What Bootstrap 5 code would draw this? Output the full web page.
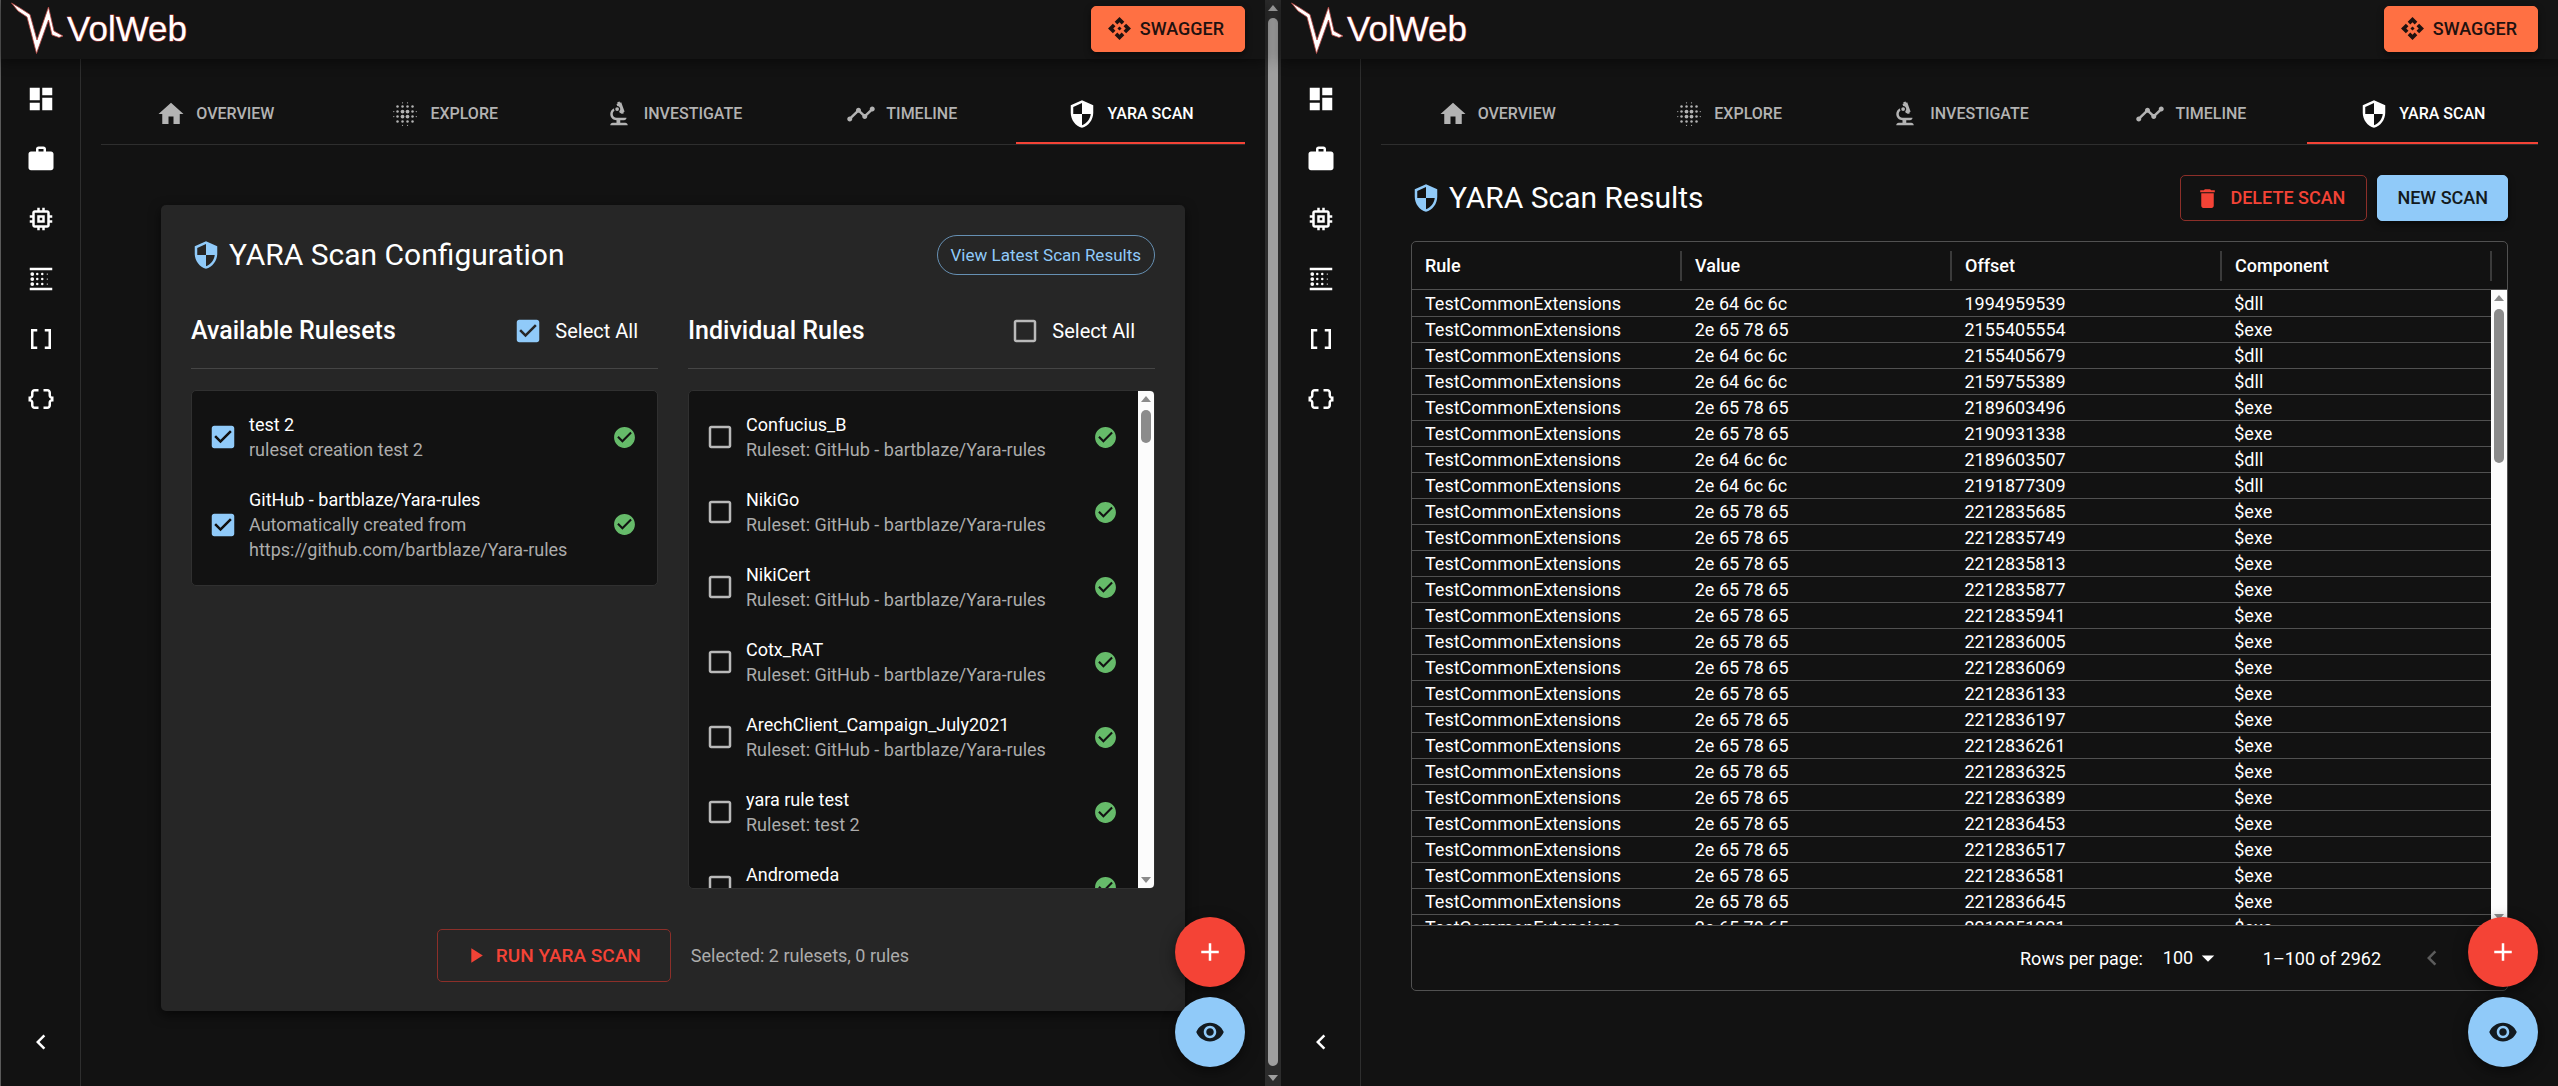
<!DOCTYPE html>
<html lang="en" data-bs-theme="dark">
<head>
<meta charset="utf-8">
<meta name="viewport" content="width=device-width, initial-scale=1">
<title>VolWeb</title>
<link href="https://cdn.jsdelivr.net/npm/bootstrap@5.3.0/dist/css/bootstrap.min.css" rel="stylesheet">
<style>
:root{--vw-bg:#121212;--vw-blue:#90caf9;--vw-red:#f44336;--vw-muted:#b3b3b3;--vw-line:#2e2e2e;--vw-grid:#515151}
body{background:var(--vw-bg);color:#fff;font-family:Roboto,"Liberation Sans",sans-serif;font-size:18px;line-height:25px;overflow:hidden}
svg{fill:currentColor;flex:none}
.ico-lg{width:30px;height:30px}
.ico-md{width:25px;height:25px}
.pane{min-width:0;background:var(--vw-bg)}
.pane-first{flex:1280 1 0;border-left:1px solid #5a5a5a}
.pane-second{flex:1277 1 0}
.topbar{height:59px;background:#141414;box-shadow:0 3px 12px rgba(0,0,0,.45);padding:0 20px 2px 10px;z-index:2}
.brand-mark{width:54px;height:54px}
.brand-name{font:400 35px/40px "Liberation Sans",sans-serif;color:#fff;-webkit-text-stroke:1px #b5423e;paint-order:stroke fill;margin-left:2px}
.btn{--bs-btn-border-radius:5px;--bs-btn-font-weight:500;--bs-btn-font-size:18px;--bs-btn-line-height:24px}
.btn-swagger{--bs-btn-bg:#ff7043;--bs-btn-color:#1f1210;--bs-btn-border-color:#ff7043;height:46px;padding:0 20px 0 15px;box-shadow:0 3px 6px rgba(0,0,0,.5)}
.side{width:80px;flex:none;border-right:1px solid var(--vw-line);padding:10px 0 14px}
.side a{height:60px;color:#fff}
.main{min-width:0}
.tabs{margin:0 20px;border-bottom:1px solid var(--vw-line);height:86px}
.tabs a{flex:1 1 0;gap:10px;color:var(--vw-muted);font-weight:500;font-size:16px;text-decoration:none;padding-top:26px;border-bottom:2px solid transparent}
.tabs a.active{color:#fff;border-color:var(--vw-red)}
.config{margin:60px 60px 0 60px;padding:30px 30px 29px;background:#262626;border-radius:5px;box-shadow:0 4px 12px rgba(0,0,0,.6)}
.slot{padding:0 20px}
.page-title{font-size:30px;line-height:40px;font-weight:400;margin:0}
.tint{color:var(--vw-blue)}
.btn-pill{--bs-btn-border-radius:20px;--bs-btn-font-size:17px;--bs-btn-font-weight:400;--bs-btn-color:var(--vw-blue);--bs-btn-border-color:#6690b3;height:40px;padding:0 13px}
.lists{gap:30px;margin-top:31px}
.lists>section{flex:1 1 0;min-width:0}
.sect{height:63px;border-bottom:1px solid #454545;padding:0 20px 12px 0;margin-bottom:21px}
.sect h2{font-size:25px;line-height:30px;font-weight:500;margin:0}
.sect label{font-size:20px}
.tick{appearance:none;width:30px;height:30px;margin:0;flex:none;background:center/30px url("data:image/svg+xml,%3Csvg xmlns='http://www.w3.org/2000/svg' viewBox='0 0 24 24'%3E%3Cpath fill='%23b9b9b9' d='M19 5v14H5V5h14m0-2H5c-1.1 0-2 .9-2 2v14c0 1.1.9 2 2 2h14c1.1 0 2-.9 2-2V5c0-1.1-.9-2-2-2z'/%3E%3C/svg%3E")}
.tick:checked{background-image:url("data:image/svg+xml,%3Csvg xmlns='http://www.w3.org/2000/svg' viewBox='0 0 24 24'%3E%3Cpath fill='%2390caf9' d='M19 3H5c-1.11 0-2 .9-2 2v14c0 1.1.89 2 2 2h14c1.11 0 2-.9 2-2V5c0-1.1-.89-2-2-2zm-9 14l-5-5 1.41-1.41L10 14.17l7.59-7.59L19 8l-9 9z'/%3E%3C/svg%3E")}
.rulebox{background:var(--vw-bg);border:1px solid #303030;border-radius:5px;overflow:hidden}
.rulebox ul{list-style:none;margin:0;padding:9px 20px 10px 16px;min-width:0}
.rulebox li{padding:12px 0 13px}
.rule-label{margin-left:11px}
.rulebox label small{display:block;font-size:inherit;color:#acacac}
.rules-scroll{height:499px}
.ok{color:#66bb6a}
.sbar{width:16px;flex:none;background:#fcfcfc;color:#8b8b8b;padding:5px 0}
.sbar i{display:block;width:10px;border-radius:5px;background:currentColor}
.sbar svg{width:10px;height:6px}
.sbar-dark{background:#2c2c2c;color:#9f9f9f}
.sbar-dark i{flex:1;margin:7px 0 9px}
.btn-line{--bs-btn-color:var(--vw-red);--bs-btn-border-color:#8c2f29}
.btn-run{height:53px;--bs-btn-font-size:19px;padding:0 29px 0 25px}
.btn-new{--bs-btn-bg:var(--vw-blue);--bs-btn-color:#131a20;--bs-btn-border-color:var(--vw-blue);padding:0 19px;box-shadow:0 3px 6px rgba(0,0,0,.5)}
.h46{height:46px}
.run-row{margin-top:40px}
.sel-note{color:#acacac;margin-left:4px}
.del-row{gap:10px}
.btn-del{gap:10px;padding:0 21px 0 14px}
.fabs{position:absolute;right:20px;bottom:19px;gap:10px;z-index:3}
.fabs button{width:70px;height:70px;border:0;border-radius:50%;box-shadow:0 4px 14px rgba(0,0,0,.5)}
.fab-add{background:var(--vw-red);color:#fff}
.fab-eye{background:var(--vw-blue);color:#131a20}
.results{margin:30px 30px 0}
.gridbox{margin-top:20px;border:1px solid var(--vw-grid);border-radius:5px}
.gridbox table{width:100%;table-layout:fixed;border-collapse:separate;border-spacing:0}
.gridhead{padding-right:15px;border-bottom:1px solid var(--vw-grid)}
.gridhead div{flex:1 1 0;height:47px;padding-left:13px;font-weight:500}
.gridhead div::after{content:"";width:2px;height:30px;background:#3b3b3b}
.gridbody{height:635px;overflow:hidden}
.gridrows{padding-top:1px}
.gridbody td{height:26px;line-height:25px;padding:0 13px;border-bottom:1px solid var(--vw-grid)}
.gridfoot{height:65px;border-top:1px solid var(--vw-grid);padding-right:10px}
.gridfoot select{appearance:none;background:none;border:0;color:#fff;width:60px;padding:0 0 1px 0}
.pagebtn{background:none;border:0;padding:0;color:#5c5c5c}
.pagebtn svg{display:block}
.pagebtn+.pagebtn{margin-left:20px}
.caret{margin-left:-30px;pointer-events:none}
.range{margin:0 36px 0 40px}
</style>
</head>
<body>
<svg class="d-none">
<symbol id="i-dash" viewBox="0 0 24 24"><path d="M3 13h8V3H3v10zm0 8h8v-6H3v6zm10 0h8V11h-8v10zm0-18v6h8V3h-8z"/></symbol>
<symbol id="i-work" viewBox="0 0 24 24"><path d="M20 6h-4V4c0-1.11-.89-2-2-2h-4c-1.11 0-2 .89-2 2v2H4c-1.11 0-1.99.89-1.99 2L2 19c0 1.11.89 2 2 2h16c1.11 0 2-.89 2-2V8c0-1.11-.89-2-2-2zm-6 0h-4V4h4v2z"/></symbol>
<symbol id="i-mem" viewBox="0 0 24 24"><path d="M15 9H9v6h6V9zm-2 4h-2v-2h2v2zm8-2V9h-2V7c0-1.1-.9-2-2-2h-2V3h-2v2h-2V3H9v2H7c-1.1 0-2 .9-2 2v2H3v2h2v2H3v2h2v2c0 1.1.9 2 2 2h2v2h2v-2h2v2h2v-2h2c1.1 0 2-.9 2-2v-2h2v-2h-2v-2h2zm-4 6H7V7h10v10z"/></symbol>
<symbol id="i-lin" viewBox="0 0 24 24"><path d="M3 3h18v2H3zM3 19h18v2H3z"/><circle cx="5" cy="8" r="1.5"/><circle cx="5" cy="12" r="1.5"/><circle cx="5" cy="16" r="1.5"/><circle cx="9" cy="8" r="1"/><circle cx="9" cy="12" r="1"/><circle cx="9" cy="16" r="1"/><circle cx="13" cy="8" r="1"/><circle cx="13" cy="12" r="1"/><circle cx="13" cy="16" r="1"/><circle cx="17" cy="8" r=".5"/><circle cx="17" cy="12" r=".5"/><circle cx="17" cy="16" r=".5"/></symbol>
<symbol id="i-arr" viewBox="0 0 24 24"><path d="M15 4v2h3v12h-3v2h5V4zM4 20h5v-2H6V6h3V4H4z"/></symbol>
<symbol id="i-obj" viewBox="0 0 24 24"><path d="M4 7v2c0 .55-.45 1-1 1H2v4h1c.55 0 1 .45 1 1v2c0 1.65 1.35 3 3 3h3v-2H7c-.55 0-1-.45-1-1v-2c0-1.3-.84-2.42-2-2.83v-.34C5.16 11.42 6 10.3 6 9V7c0-.55.45-1 1-1h3V4H7C5.35 4 4 5.35 4 7zM21 10c-.55 0-1-.45-1-1V7c0-1.65-1.35-3-3-3h-3v2h3c.55 0 1 .45 1 1v2c0 1.3.84 2.42 2 2.83v.34c-1.16.41-2 1.52-2 2.83v2c0 .55-.45 1-1 1h-3v2h3c1.65 0 3-1.35 3-3v-2c0-.55.45-1 1-1h1v-4h-1z"/></symbol>
<symbol id="i-left" viewBox="0 0 24 24"><path d="M15.41 7.41L14 6l-6 6 6 6 1.41-1.41L10.83 12z"/></symbol>
<symbol id="i-right" viewBox="0 0 24 24"><path d="M8.59 16.59L13.17 12 8.59 7.41 10 6l6 6-6 6z"/></symbol>
<symbol id="i-home" viewBox="0 0 24 24"><path d="M10 20v-6h4v6h5v-8h3L12 3 2 12h3v8z"/></symbol>
<symbol id="i-blur" viewBox="0 0 24 24"><circle cx="6" cy="6" r="1"/><circle cx="10" cy="6" r="1"/><circle cx="14" cy="6" r="1"/><circle cx="18" cy="6" r="1"/><circle cx="6" cy="10" r="1"/><circle cx="10" cy="10" r="1.5"/><circle cx="14" cy="10" r="1.5"/><circle cx="18" cy="10" r="1"/><circle cx="6" cy="14" r="1"/><circle cx="10" cy="14" r="1.5"/><circle cx="14" cy="14" r="1.5"/><circle cx="18" cy="14" r="1"/><circle cx="6" cy="18" r="1"/><circle cx="10" cy="18" r="1"/><circle cx="14" cy="18" r="1"/><circle cx="18" cy="18" r="1"/><circle cx="10" cy="3" r=".5"/><circle cx="14" cy="3" r=".5"/><circle cx="10" cy="21" r=".5"/><circle cx="14" cy="21" r=".5"/><circle cx="3" cy="10" r=".5"/><circle cx="3" cy="14" r=".5"/><circle cx="21" cy="10" r=".5"/><circle cx="21" cy="14" r=".5"/></symbol>
<symbol id="i-bio" viewBox="0 0 24 24"><path d="M7 19c-1.1 0-2 .9-2 2h14c0-1.1-.9-2-2-2h-4v-2h3c1.1 0 2-.9 2-2h-8c-1.66 0-3-1.34-3-3 0-1.09.59-2.04 1.46-2.56C8.17 9.03 8 8.54 8 8c0-.21.04-.42.09-.62C6.28 8.13 5 9.92 5 12c0 2.76 2.24 5 5 5v2H7z"/><path d="M10.56 5.51C11.91 5.54 13 6.64 13 8c0 .75-.33 1.41-.85 1.87l.59 1.62.94-.34.34.94 1.88-.68-.34-.94.94-.34-2.74-7.52-.94.34-.34-.94-1.88.68.34.94-.94.35.56 1.53z"/><circle cx="10.5" cy="8" r="1.5"/></symbol>
<symbol id="i-time" viewBox="0 0 24 24"><path d="M23 8c0 1.1-.9 2-2 2-.18 0-.35-.02-.51-.07l-3.56 3.55c.05.16.07.34.07.52 0 1.1-.9 2-2 2s-2-.9-2-2c0-.18.02-.36.07-.52l-2.55-2.55c-.16.05-.34.07-.52.07s-.36-.02-.52-.07l-4.55 4.56c.05.16.07.33.07.51 0 1.1-.9 2-2 2s-2-.9-2-2 .9-2 2-2c.18 0 .35.02.51.07l4.56-4.55C8.02 9.36 8 9.18 8 9c0-1.1.9-2 2-2s2 .9 2 2c0 .18-.02.36-.07.52l2.55 2.55c.16-.05.34-.07.52-.07s.36.02.52.07l3.55-3.56C19.02 8.35 19 8.18 19 8c0-1.1.9-2 2-2s2 .9 2 2z"/></symbol>
<symbol id="i-sec" viewBox="0 0 24 24"><path d="M12 1L3 5v6c0 5.55 3.84 10.74 9 12 5.16-1.26 9-6.45 9-12V5l-9-4zm0 10.99h7c-.53 4.12-3.28 7.79-7 8.94V12H5V6.3l7-3.11v8.8z"/></symbol>
<symbol id="i-api" viewBox="0 0 24 24"><path d="m14 12-2 2-2-2 2-2 2 2zm-2-6 2.12 2.12 2.5-2.5L12 1 7.38 5.62l2.5 2.5L12 6zm-6 6 2.12-2.12-2.5-2.5L1 12l4.62 4.62 2.5-2.5L6 12zm12 0-2.12 2.12 2.5 2.5L23 12l-4.62-4.62-2.5 2.5L18 12zm-6 6-2.12-2.12-2.5 2.5L12 23l4.62-4.62-2.5-2.5L12 18z"/></symbol>
<symbol id="i-ok" viewBox="0 0 24 24"><path d="M12 2C6.48 2 2 6.48 2 12s4.48 10 10 10 10-4.48 10-10S17.52 2 12 2zm-2 15-5-5 1.41-1.41L10 14.17l7.59-7.59L19 8l-9 9z"/></symbol>
<symbol id="i-play" viewBox="0 0 24 24"><path d="M8 5v14l11-7z"/></symbol>
<symbol id="i-del" viewBox="0 0 24 24"><path d="M6 19c0 1.1.9 2 2 2h8c1.1 0 2-.9 2-2V7H6v12zM19 4h-3.5l-1-1h-5l-1 1H5v2h14V4z"/></symbol>
<symbol id="i-add" viewBox="0 0 24 24"><path d="M19 13h-6v6h-2v-6H5v-2h6V5h2v6h6v2z"/></symbol>
<symbol id="i-eye" viewBox="0 0 24 24"><path d="M12 4.5C7 4.5 2.73 7.61 1 12c1.73 4.39 6 7.5 11 7.5s9.27-3.11 11-7.5c-1.73-4.39-6-7.5-11-7.5zM12 17c-2.76 0-5-2.24-5-5s2.24-5 5-5 5 2.24 5 5-2.24 5-5 5zm0-8c-1.66 0-3 1.34-3 3s1.34 3 3 3 3-1.34 3-3-1.34-3-3-3z"/></symbol>
<symbol id="i-drop" viewBox="0 0 24 24"><path d="M7 10l5 5 5-5z"/></symbol>
<symbol id="i-up" viewBox="0 0 10 6"><path d="M0 6h10L5 0z"/></symbol>
<symbol id="i-dn" viewBox="0 0 10 6"><path d="M0 0h10L5 6z"/></symbol>
<symbol id="i-mark" viewBox="0 0 54 54"><path fill="#fff" stroke="#b5423e" stroke-width=".8" d="M.5 1 9 6 19 12.500 26 38 37.500 5 43 29 52 34 48 35.500 41 33 37.500 18 25.500 51.500 16 15 7 9z"/></symbol>
</svg>
<div class="d-flex vh-100">
  <div class="pane pane-first d-flex">
    <div class="pane position-relative d-flex flex-column flex-grow-1" data-pane="config"></div>
    <div class="sbar sbar-dark d-flex flex-column align-items-center"><svg><use href="#i-up"/></svg><i></i><svg><use href="#i-dn"/></svg></div>
  </div>
  <div class="pane pane-second position-relative d-flex flex-column" data-pane="results"></div>
</div>

<template id="shell">
  <header class="topbar d-flex align-items-center justify-content-between position-relative">
    <a href="#" class="d-flex text-decoration-none"><svg class="brand-mark"><use href="#i-mark"/></svg><span class="brand-name align-self-center">VolWeb</span></a>
    <button type="button" class="btn btn-swagger d-flex align-items-center gap-2"><svg class="ico-md"><use href="#i-api"/></svg>SWAGGER</button>
  </header>
  <div class="d-flex flex-grow-1">
    <nav class="side d-flex flex-column align-items-stretch" aria-label="Sections"></nav>
    <main class="main flex-grow-1">
      <nav class="tabs d-flex" aria-label="Evidence"></nav>
      <div class="slot"></div>
    </main>
  </div>
  <div class="fabs d-flex flex-column">
    <button type="button" class="fab-add" aria-label="Add"><svg class="ico-lg"><use href="#i-add"/></svg></button>
    <button type="button" class="fab-eye" aria-label="View"><svg class="ico-lg"><use href="#i-eye"/></svg></button>
  </div>
</template>

<template id="config">
  <div class="config">
    <div class="d-flex align-items-center justify-content-between">
      <div class="d-flex align-items-center tint"><svg class="ico-lg me-2"><use href="#i-sec"/></svg><h1 class="page-title text-white">YARA Scan Configuration</h1></div>
      <button type="button" class="btn btn-pill">View Latest Scan Results</button>
    </div>
    <div class="lists d-flex align-items-start">
      <section>
        <div class="sect d-flex align-items-center justify-content-between"><h2>Available Rulesets</h2><div class="d-flex align-items-center gap-2"><input class="tick me-1" type="checkbox" id="all-sets" checked><label for="all-sets">Select All</label></div></div>
        <div class="rulebox"><ul data-list="sets"></ul></div>
      </section>
      <section>
        <div class="sect d-flex align-items-center justify-content-between"><h2>Individual Rules</h2><div class="d-flex align-items-center gap-2"><input class="tick me-1" type="checkbox" id="all-rules"><label for="all-rules">Select All</label></div></div>
        <div class="rulebox rules-scroll d-flex"><ul class="flex-grow-1" data-list="rules"></ul>
          <div class="sbar d-flex flex-column align-items-center"><svg><use href="#i-up"/></svg><i class="mt-2" style="height:33px"></i><svg class="mt-auto"><use href="#i-dn"/></svg></div>
        </div>
      </section>
    </div>
    <div class="run-row d-flex align-items-center justify-content-center gap-3">
      <button type="button" class="btn btn-line btn-run d-flex align-items-center gap-2"><svg class="ico-md"><use href="#i-play"/></svg>RUN YARA SCAN</button>
      <span class="sel-note">Selected: 2 rulesets, 0 rules</span>
    </div>
  </div>
</template>

<template id="results">
  <div class="results">
    <div class="d-flex align-items-center justify-content-between">
      <div class="d-flex align-items-center tint"><svg class="ico-lg me-2"><use href="#i-sec"/></svg><h1 class="page-title text-white">YARA Scan Results</h1></div>
      <div class="d-flex del-row">
        <button type="button" class="btn btn-line h46 btn-del d-flex align-items-center"><svg class="ico-md"><use href="#i-del"/></svg>DELETE SCAN</button>
        <button type="button" class="btn btn-new h46">NEW SCAN</button>
      </div>
    </div>
    <div class="gridbox">
      <div class="gridhead d-flex" aria-hidden="true"><div class="d-flex align-items-center justify-content-between">Rule</div><div class="d-flex align-items-center justify-content-between">Value</div><div class="d-flex align-items-center justify-content-between">Offset</div><div class="d-flex align-items-center justify-content-between">Component</div></div>
      <div class="gridbody d-flex">
        <div class="gridrows flex-grow-1"><table aria-label="Scan results"><tbody></tbody></table></div>
        <div class="sbar d-flex flex-column align-items-center"><svg><use href="#i-up"/></svg><i class="mt-2" style="height:154px"></i><svg class="mt-auto"><use href="#i-dn"/></svg></div>
      </div>
      <div class="gridfoot d-flex align-items-center justify-content-end">
        <label for="rpp" class="me-3">Rows per page:</label>
        <select id="rpp" class="ms-1"><option>100</option></select><svg class="ico-lg caret"><use href="#i-drop"/></svg>
        <span class="range">1–100 of 2962</span>
        <button type="button" class="pagebtn" aria-label="Previous page" disabled><svg class="ico-lg"><use href="#i-left"/></svg></button>
        <button type="button" class="pagebtn text-white" aria-label="Next page"><svg class="ico-lg"><use href="#i-right"/></svg></button>
      </div>
    </div>
  </div>
</template>
<script>
const ico = (n, c) => `<svg class="${c}"><use href="#i-${n}"/></svg>`;
const side = [['dash','Dashboard'],['work','Cases'],['mem','Evidences'],['lin','Symbols'],['arr','Rules'],['obj','Rulesets']];
const tabs = [['home','OVERVIEW'],['blur','EXPLORE'],['bio','INVESTIGATE'],['time','TIMELINE'],['sec','YARA SCAN']];
document.querySelectorAll('[data-pane]').forEach(p => {
  p.append(document.getElementById('shell').content.cloneNode(true));
  p.querySelector('.side').innerHTML = side.map(([i, t]) => `<a href="#" aria-label="${t}" class="d-flex align-items-center justify-content-center">${ico(i, 'ico-lg')}</a>`).join('')
    + `<a href="#" aria-label="Collapse" class="d-flex align-items-center justify-content-center mt-auto">${ico('left', 'ico-lg')}</a>`;
  p.querySelector('.tabs').innerHTML = tabs.map(([i, t], k) => `<a href="#" class="d-flex align-items-center justify-content-center${k == 4 ? ' active' : ''}">${ico(i, 'ico-lg')}${t}</a>`).join('');
  p.querySelector('.slot').append(document.getElementById(p.dataset.pane).content.cloneNode(true));
});
const item = (id, name, sub, on) => `<li class="d-flex align-items-center justify-content-between"><div class="d-flex align-items-center"><input class="tick" type="checkbox" id="${id}"${on ? ' checked' : ''}><label class="rule-label" for="${id}">${name}<small>${sub}</small></label></div>${ico('ok', 'ico-md ok')}</li>`;
const gh = 'Ruleset: GitHub - bartblaze/Yara-rules';
document.querySelector('[data-list=sets]').innerHTML =
  item('s0', 'test 2', 'ruleset creation test 2', true) +
  item('s1', 'GitHub - bartblaze/Yara-rules', 'Automatically created from<br>https://github.com/bartblaze/Yara-rules', true);
document.querySelector('[data-list=rules]').innerHTML =
  [['Confucius_B', gh], ['NikiGo', gh], ['NikiCert', gh], ['Cotx_RAT', gh], ['ArechClient_Campaign_July2021', gh], ['yara rule test', 'Ruleset: test 2'], ['Andromeda', gh]]
  .map(([n, s], k) => item('r' + k, n, s)).join('');
const offs = '1994959539d 2155405554e 2155405679d 2159755389d 2189603496e 2190931338e 2189603507d 2191877309d 2212835685e 2212835749e 2212835813e 2212835877e 2212835941e 2212836005e 2212836069e 2212836133e 2212836197e 2212836261e 2212836325e 2212836389e 2212836453e 2212836517e 2212836581e 2212836645e 2212851221e'.split(' ');
document.querySelector('.gridbox tbody').innerHTML = offs.map(o => {
  const d = o.endsWith('d');
  return `<tr><td>TestCommonExtensions</td><td>${d ? '2e 64 6c 6c' : '2e 65 78 65'}</td><td>${o.slice(0, 10)}</td><td>${d ? '$dll' : '$exe'}</td></tr>`;
}).join('');
</script>
<script src="https://cdn.jsdelivr.net/npm/bootstrap@5.3.0/dist/js/bootstrap.bundle.min.js"></script>
</body>
</html>
